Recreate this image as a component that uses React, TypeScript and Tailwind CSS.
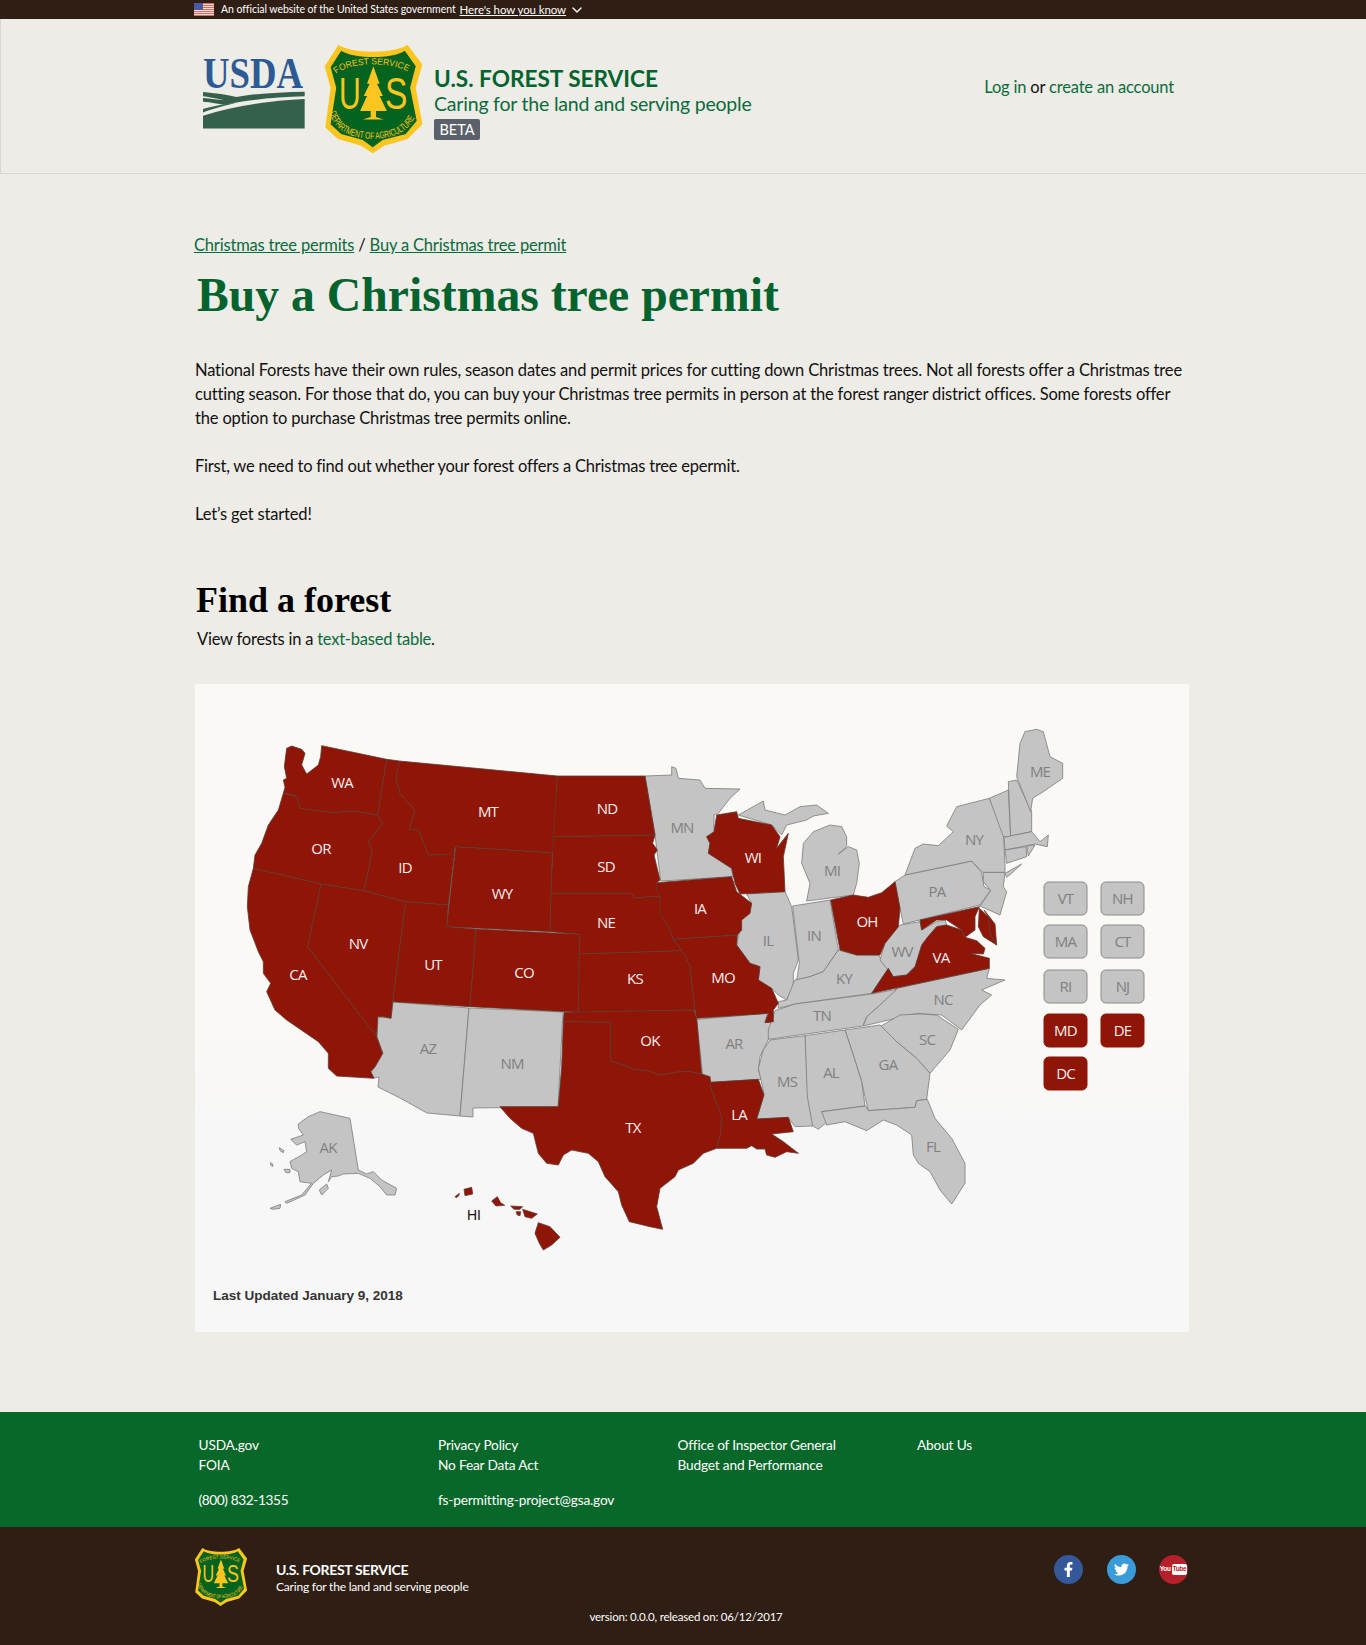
import { FaFacebookF, FaTwitter } from "react-icons/fa";
import { ChevronDown } from "lucide-react";

// -----------------------------------------------------------------------------
// MAP DATA
// -----------------------------------------------------------------------------
// Points are traced at 3x, each region against its own origin on the page.
const RED = "#8f1506";
const GREY = "#c4c4c4";
const PANEL_X = 195;
const PANEL_Y = 684;

const origins: Record<string, [number, number, number]> = {
  w: [220, 700, 1 / 3],
  e: [640, 700, 1 / 3],
  s: [490, 1000, 1 / 3],
  se: [700, 1000, 1 / 3],
  ak: [260, 1100, 1 / 3],
  p: [0, 0, 1],
};

const redShapes: [string, string][] = [
  ["w", "305,137 500,178 473,345 400,333 340,338 290,332 240,325 232,290 205,282 190,280 195,262 190,240 200,235 193,200 200,145 215,138 245,148 255,160 245,195 260,222 295,195 302,170"],
  ["w", "190,280 232,290 240,325 290,332 340,338 400,333 473,345 488,372 445,425 457,455 432,572 303,552 100,505 105,465 125,430 145,375 175,330"],
  ["w", "100,505 303,552 263,740 470,1010 488,1060 465,1100 452,1115 462,1135 350,1128 325,1105 325,1060 295,1025 200,960 165,930 140,875 152,850 130,820 130,785 115,755 90,690 82,620 85,560"],
  ["w", "303,552 432,572 557,605 518,905 513,955 490,950 473,950 470,1010 263,740"],
  ["w", "500,178 538,183 528,235 540,280 585,330 568,388 595,390 625,465 680,462 705,445 685,615 557,605 432,572 457,455 445,425 488,372 473,345"],
  ["w", "538,183 1012,228 1000,458 707,440 695,462 625,465 595,390 568,388 585,330 540,280 528,235"],
  ["w", "707,440 997,458 990,695 680,680"],
  ["w", "557,605 685,615 680,680 768,687 750,920 518,905"],
  ["w", "768,687 1080,703 1075,937 750,920"],
  ["w", "1012,228 1275,228 1305,405 1000,410"],
  ["w", "1000,410 1305,405 1298,430 1312,450 1302,465 1320,540 1310,548 1320,590 1285,590 1245,595 1235,580 993,580"],
  ["w", "993,580 1235,580 1245,595 1285,590 1320,590 1322,640 1345,680 1360,718 1395,765 1385,752 1078,762 1080,703 990,695"],
  ["w", "1078,762 1385,752 1395,765 1410,800 1425,930 1075,937"],
  ["e", "50,548 275,530 290,575 335,610 330,640 305,660 305,690 292,705 100,718 85,680 60,640 60,590 50,575"],
  ["e", "100,718 292,705 290,735 330,790 360,800 355,840 395,865 415,910 400,930 400,965 375,968 385,940 170,955 165,930 150,800 135,765"],
  ["e", "230,345 290,335 295,355 395,375 420,410 410,445 445,400 430,470 435,575 300,582 285,550 275,505 205,460 210,430 200,410 222,395"],
  ["e", "572,600 640,585 685,592 725,578 765,545 780,625 775,680 735,730 720,765 650,765 600,750"],
  ["e", "695,880 745,805 760,830 800,825 825,800 845,735 860,715 890,680 920,675 965,690 975,712 1010,722 1035,745 1030,762 990,760 1048,775 1048,805"],
  ["e", "840,660 1018,620 1005,650 1005,690 975,712 965,690 920,660 890,660 845,690"],
  ["e", "1018,625 1045,650 1050,700 1070,735 1030,710 1015,680"],
  ["e", "1032,630 1065,672 1070,735 1050,700 1045,650"],
  ["s", "222,37 612,30 620,55 635,222 600,215 570,215 510,225 470,212 430,208 400,195 362,183 362,67 220,65"],
  ["s", "220,65 362,67 362,183 400,195 430,208 470,212 510,225 570,215 600,215 635,222 660,230 665,270 695,350 692,400 680,445 640,460 610,490 565,510 555,530 510,565 500,620 518,688 480,680 418,665 395,615 385,575 345,530 325,485 295,460 245,450 220,465 205,495 170,490 145,460 130,400 95,385 60,355 30,320 205,320 215,200"],
  ["s", "660,247 805,238 822,285 800,357 895,352 910,395 845,402 880,425 925,460 890,455 855,472 830,465 825,447 800,447 785,437 770,445 680,445 692,400 695,350 665,270"],
  ["ak", "612,268 635,262 638,282 615,287"],
  ["ak", "585,290 598,280 596,288 588,293"],
  ["ak", "695,303 712,290 722,308 734,316 708,318"],
  ["ak", "752,318 788,320 780,328 762,328"],
  ["ak", "768,335 782,335 780,347 772,345"],
  ["ak", "788,328 832,342 815,355 795,350"],
  ["ak", "835,368 870,380 900,412 875,435 850,450 838,430 825,400"],
];

const greyShapes: [string, string][] = [
  ["p", "393,1002 469,1008 460,1116 427,1113 400,1098 378,1087 379,1077 374,1078 371,1072 375,1067 383,1053 377,1037 378,1017 391,1018"],
  ["p", "469,1008 563,1012 558,1107 473,1108 473,1117 460,1116"],
  ["s", "620,58 832,40 825,68 850,66 838,112 810,170 805,210 815,238 662,247 638,225"],
  ["e", "15,228 95,225 95,200 108,205 115,235 180,240 195,265 300,267 270,295 235,340 222,345 222,400 200,410 210,430 205,460 275,505 280,530 62,543 45,405"],
  ["e", "295,345 370,303 375,330 435,345 480,320 530,315 565,340 520,348 500,360 440,375 425,405 395,375"],
  ["e", "490,430 520,395 570,375 605,380 620,410 620,440 595,462 625,440 650,450 658,490 650,550 640,585 500,603 510,550 485,490"],
  ["e", "320,582 435,575 455,620 475,780 460,820 460,860 440,900 415,885 395,865 355,840 360,800 330,790 290,735 305,660 335,610"],
  ["e", "458,618 570,600 595,750 550,815 510,830 470,840 478,790"],
  ["e", "440,900 460,850 465,840 510,830 550,815 595,750 650,765 715,765 745,805 695,880 465,912 415,925 415,905"],
  ["e", "780,675 840,665 845,690 890,665 915,660 920,675 890,680 860,715 845,770 825,800 800,825 760,830 720,780 735,730 775,680"],
  ["e", "765,545 795,525 995,483 1025,517 1032,560 1052,570 1020,615 790,672 780,625"],
  ["e", "1030,517 1095,517 1090,560 1100,575 1080,645 1020,618 1052,572 1030,545"],
  ["e", "795,525 825,445 850,432 895,437 940,395 920,378 950,320 1048,295 1090,390 1095,495 1095,517 1028,517 995,483"],
  ["e", "1095,520 1145,492 1115,520 1100,532"],
  ["e", "1048,295 1105,270 1112,410 1090,410"],
  ["e", "1105,245 1130,240 1175,335 1175,395 1112,408"],
  ["e", "1130,230 1140,130 1155,95 1190,88 1210,95 1230,170 1268,190 1268,235 1210,275 1178,295 1172,335"],
  ["e", "1092,412 1175,395 1200,425 1225,405 1222,440 1185,432 1095,450"],
  ["e", "1095,450 1158,440 1160,470 1100,490"],
  ["e", "1160,438 1185,435 1165,468"],
  ["e", "770,865 1048,805 1040,835 1095,840 1025,870 1055,885 1020,915 965,990 905,945 830,940 725,965 670,978 680,950 720,915"],
  ["e", "385,1018 385,990 405,932 465,912 695,882 770,868 720,915 680,950 668,978"],
  ["se", "540,80 600,45 660,42 710,45 775,88 750,150 690,220 650,175 590,125"],
  ["se", "435,90 540,75 590,125 650,175 690,220 680,298 650,302 645,322 505,332 495,290 485,245 455,150"],
  ["se", "315,107 435,90 455,150 485,245 495,318 365,335 382,365 355,388 335,375 320,290"],
  ["se", "210,120 315,107 322,290 338,378 285,380 265,352 170,358 192,280 175,205 190,150"],
  ["se", "365,335 497,318 505,332 645,322 650,302 682,298 705,355 755,415 795,490 795,550 755,612 720,570 690,515 655,490 640,465 635,405 590,375 550,360 500,392 435,365 380,375"],
  ["ak", "115,72 145,50 180,35 270,55 295,210 320,222 340,215 365,240 410,265 405,285 380,285 360,260 330,235 295,220 250,222 235,228 215,230 205,245 215,210 190,225 160,250 135,285 80,310 75,305 125,285 155,250 120,245 115,215 95,205 90,185 125,165 140,155 135,125 110,135 92,118 130,105 115,85"],
  ["ak", "178,270 200,252 205,265 185,285"],
  ["ak", "30,325 62,313 60,325 38,328"],
  ["ak", "58,143 72,152 70,158 60,152"],
  ["ak", "32,188 38,192 38,200 32,195"],
  ["ak", "72,208 90,208 90,218 78,218"],
];

// label, page x, page y, on a red state
const labels: [string, number, number, boolean][] = [
  ["WA", 342, 783, true], ["MT", 488, 812, true], ["ND", 607, 809, true], ["ME", 1040, 772, false],
  ["MN", 682, 828, false], ["WI", 753, 858, true], ["MI", 832, 871, false], ["NY", 974, 840, false],
  ["OR", 321, 849, true], ["ID", 405, 868, true], ["SD", 606, 867, true], ["WY", 502, 894, true],
  ["IA", 700, 909, true], ["PA", 937, 892, false], ["OH", 867, 922, true], ["IN", 814, 936, false],
  ["IL", 768, 941, false], ["NE", 606, 923, true], ["NV", 358, 944, true], ["UT", 433, 965, true],
  ["VA", 941, 958, true], ["WV", 902, 952, false], ["CA", 298, 975, true], ["CO", 524, 973, true],
  ["KS", 635, 979, true], ["MO", 723, 978, true], ["KY", 844, 979, false], ["NC", 943, 1000, false],
  ["TN", 822, 1016, false], ["OK", 650, 1041, true], ["AR", 734, 1044, false], ["SC", 927, 1040, false],
  ["AZ", 428, 1049, false], ["NM", 512, 1064, false], ["GA", 888, 1065, false], ["AL", 831, 1073, false],
  ["MS", 787, 1082, false], ["LA", 739, 1115, true], ["TX", 633, 1128, true], ["FL", 933, 1147, false],
  ["AK", 328, 1148, false],
];

const keys: [string, number, number, boolean][] = [
  ["VT", 1044, 882, false], ["NH", 1101, 882, false],
  ["MA", 1044, 925, false], ["CT", 1101, 925, false],
  ["RI", 1044, 970, false], ["NJ", 1101, 970, false],
  ["MD", 1044, 1014, true], ["DE", 1101, 1014, true],
  ["DC", 1044, 1057, true],
];

function Shape({ o, points, fill, stroke }: { o: string; points: string; fill: string; stroke: string }) {
  const [ox, oy, s] = origins[o];
  return (
    <polygon
      points={points}
      fill={fill}
      stroke={stroke}
      strokeWidth={0.8}
      strokeLinejoin="round"
      vectorEffect="non-scaling-stroke"
      transform={`translate(${ox - PANEL_X} ${oy - PANEL_Y}) scale(${s})`}
    />
  );
}

function ForestMap() {
  return (
    <svg viewBox="0 0 994 648" className="block w-[994px] h-[648px]">
      {greyShapes.map(([o, p], i) => (
        <Shape key={i} o={o} points={p} fill={GREY} stroke="#7b7b7b" />
      ))}
      {redShapes.map(([o, p], i) => (
        <Shape key={i} o={o} points={p} fill={RED} stroke="#5e3a33" />
      ))}
      {labels.map(([t, x, y, red]) => (
        <text
          key={t}
          x={x - PANEL_X}
          y={y - PANEL_Y + 5}
          textAnchor="middle"
          fontFamily="'Open Sans', sans-serif"
          fontSize={15}
          letterSpacing={-0.8}
          fill={red ? "#f6eeee" : "#808080"}
        >
          {t}
        </text>
      ))}
      {keys.map(([t, x, y, red]) => (
        <g key={t}>
          <rect
            x={x - PANEL_X}
            y={y - PANEL_Y}
            width={43}
            height={33}
            rx={5}
            fill={red ? RED : GREY}
            stroke={red ? RED : "#8a8a8a"}
          />
          <text
            x={x - PANEL_X + 21.5}
            y={y - PANEL_Y + 22}
            textAnchor="middle"
            fontFamily="'Open Sans', sans-serif"
            fontSize={15}
            letterSpacing={-0.8}
            fill={red ? "#f6eeee" : "#808080"}
          >
            {t}
          </text>
        </g>
      ))}
      <text x={279} y={536} fontFamily="'Liberation Sans', sans-serif" fontSize={14} textAnchor="middle" fill="#111">
        HI
      </text>
      <text x={18} y={616} fontFamily="'Liberation Sans', sans-serif" fontWeight={700} fontSize={13.5} fill="#333">
        Last Updated January 9, 2018
      </text>
    </svg>
  );
}

// -----------------------------------------------------------------------------
// LOGOS
// -----------------------------------------------------------------------------
function UsdaLogo() {
  return (
    <svg viewBox="25 80 305 217" className="block w-[102px] h-[73px]">
      <text
        transform="translate(25 175) scale(0.82 1)"
        fontFamily="'Liberation Serif', serif"
        fontWeight={700}
        fontSize={134}
        fill="#2c5a94"
      >
        USDA
      </text>
      <path d="M25 258C120 228 230 212 329 208V296H25Z" fill="#34604c" />
      <path
        d="M25 187C60 190 100 195 125 202 180 192 260 187 329 186V200C240 202 150 212 90 225 70 222 50 218 25 216V205C50 207 70 210 90 212 60 205 40 202 25 200Z"
        fill="#34604c"
      />
      <path d="M25 238C60 228 100 222 130 218 90 228 60 236 25 248Z" fill="#34604c" />
    </svg>
  );
}

function ShieldLogo({ className }: { className: string }) {
  return (
    <svg viewBox="385 35 305 338" className={className}>
      <path
        d="M432 40C470 68 600 68 640 40L685 100 665 170 685 280 640 325 570 345 535 368 500 345 430 325 392 290 408 170 390 105Z"
        fill="#fcc520"
      />
      <path
        d="M440 58C480 84 595 84 632 58L665 105 648 170 668 270 635 310 565 328 535 350 505 328 440 310 408 280 425 170 408 108Z"
        fill="#03631f"
      />
      <path id="shield-top" d="M425 128C465 90 605 90 650 128" fill="none" />
      <path id="shield-bottom" d="M405 245C425 310 480 322 535 325 590 322 645 310 668 245" fill="none" />
      <text fontFamily="'Liberation Sans', sans-serif" fontSize={27} fill="#fcc520">
        <textPath href="#shield-top" textLength={225} lengthAdjust="spacingAndGlyphs">
          FOREST SERVICE
        </textPath>
      </text>
      <text fontFamily="'Liberation Sans', sans-serif" fontSize={29} fill="#fcc520">
        <textPath href="#shield-bottom" textLength={315} lengthAdjust="spacingAndGlyphs">
          DEPARTMENT OF AGRICULTURE
        </textPath>
      </text>
      <text
        transform="translate(433 235) scale(0.69 1)"
        fontFamily="'Liberation Sans', sans-serif"
        fontSize={132}
        fill="#fcc520"
      >
        U
      </text>
      <text
        transform="translate(572 235) scale(0.77 1)"
        fontFamily="'Liberation Sans', sans-serif"
        fontSize={132}
        fill="#fcc520"
      >
        S
      </text>
      <path
        d="M537 105L556 158 548 158 566 195 556 195 578 240H545V258L568 266H505L529 258V240H497L518 195 508 195 526 158 518 158Z"
        fill="#fcc520"
      />
    </svg>
  );
}

function Flag() {
  return (
    <svg viewBox="0 0 20 13" className="block w-5 h-[13px]">
      <rect width="20" height="13" fill="#f6dcd8" />
      {[0, 2, 4, 6, 8, 10, 12].map((y) => (
        <rect key={y} y={y} width="20" height="1" fill="#d9695c" />
      ))}
      <rect width="9" height="7" fill="#4a5aa0" />
    </svg>
  );
}

// -----------------------------------------------------------------------------
// PAGE
// -----------------------------------------------------------------------------
const footerColumns = [
  ["USDA.gov", "FOIA"],
  ["Privacy Policy", "No Fear Data Act"],
  ["Office of Inspector General", "Budget and Performance"],
  ["About Us"],
];

export default function App() {
  return (
    <div className="w-[1366px] h-[1645px] bg-[#eeece6] text-[#111] font-['Lato',sans-serif] overflow-hidden">
      {/* ---------------- GOV BANNER ---------------- */}
      <div className="h-[19px] bg-[#2f1e14] flex items-center pl-[194px] text-white">
        <Flag />
        <span className="ml-[7px] text-[10.5px] leading-none tracking-[-0.06px]">An official website of the United States government</span>
        <a className="ml-[4px] text-[11.5px] leading-none underline tracking-[-0.1px]">Here's how you know</a>
        <ChevronDown size={16} className="ml-[3px]" />
      </div>

      {/* ---------------- HEADER ---------------- */}
      <header className="h-[155px] border-l border-b border-[#d6d7d9] flex items-start pl-[202px] pr-[192px]">
        <div className="mt-[37px]">
          <UsdaLogo />
        </div>
        <div className="ml-[18px] mt-[24px]">
          <ShieldLogo className="block w-[101px] h-[112px]" />
        </div>
        <div className="ml-[10px] mt-[48px]">
          <div className="text-[22.6px] leading-6 font-bold text-[#03632f]">U.S. FOREST SERVICE</div>
          <div className="text-[19.5px] leading-6 tracking-[-0.2px] text-[#0a6b3d] mt-[1px]">Caring for the land and serving people</div>
          <div className="mt-[3px] w-[46px] h-[21px] rounded-[2px] bg-[#5b616b] text-white text-[14.5px] leading-[21px] text-center">
            BETA
          </div>
        </div>
        <div className="ml-auto mt-[56px] text-[16.5px] leading-6 tracking-[-0.18px]">
          <a className="text-[#0a6b3d]">Log in</a> or <a className="text-[#0a6b3d]">create an account</a>
        </div>
      </header>

      {/* ---------------- MAIN ---------------- */}
      <main className="pl-[195px] w-[1189px]">
        <div className="pt-[59px] -ml-px text-[16.5px] leading-6 tracking-[-0.18px]">
          <a className="text-[#0a6b3d] underline">Christmas tree permits</a> /{" "}
          <a className="text-[#0a6b3d] underline">Buy a Christmas tree permit</a>
        </div>
        <h1 className="mt-[12px] ml-[2px] text-[47.7px] leading-[52px] font-bold text-[#03632f] font-['Liberation_Serif',serif]">
          Buy a Christmas tree permit
        </h1>
        <div className="mt-[37px] text-[16.5px] leading-6 tracking-[-0.17px] whitespace-nowrap">
          <p>National Forests have their own rules, season dates and permit prices for cutting down Christmas trees. Not all forests offer a Christmas tree</p>
          <p>cutting season. For those that do, you can buy your Christmas tree permits in person at the forest ranger district offices. Some forests offer</p>
          <p>the option to purchase Christmas tree permits online.</p>
          <p className="mt-6 tracking-[-0.22px]">First, we need to find out whether your forest offers a Christmas tree epermit.</p>
          <p className="mt-6">Let’s get started!</p>
        </div>
        <h2 className="mt-[54px] ml-px text-[36px] leading-10 font-bold text-black font-['Liberation_Serif',serif]">
          Find a forest
        </h2>
        <p className="mt-[7px] ml-[2px] text-[16.5px] leading-6 tracking-[-0.22px]">
          View forests in a <a className="text-[#0a6b3d]">text-based table</a>.
        </p>
        <div className="mt-[33px] w-[994px] h-[648px] bg-linear-to-b from-[#fbf9f5] from-50% to-[#f7f7f7] to-70%">
          <ForestMap />
        </div>
      </main>

      {/* ---------------- FOOTER LINKS ---------------- */}
      <div className="mt-[80px] h-[115px] bg-[#086829] text-white text-[13.7px] leading-5 tracking-[-0.18px] pl-[198.5px] pt-[23px]">
        <div className="grid grid-cols-[239.5px_239.5px_239.5px_239.5px] w-[958px]">
          {footerColumns.map((links) => (
            <div key={links[0]}>
              {links.map((l) => (
                <div key={l}>{l}</div>
              ))}
            </div>
          ))}
        </div>
        <div className="mt-[15px] grid grid-cols-[239.5px_239.5px]">
          <div className="tracking-[-0.4px]">(800) 832-1355</div>
          <div>fs-permitting-project@gsa.gov</div>
        </div>
      </div>

      {/* ---------------- FOOTER BRAND ---------------- */}
      <footer className="h-[118px] bg-[#2f1e14] text-white">
        <div className="flex items-start pl-[194px] pr-[178px] pt-[20px]">
          <ShieldLogo className="block w-[54px] h-[60px]" />
          <div className="ml-[28px] mt-[13px]">
            <div className="text-[14px] leading-5 font-bold tracking-[-0.35px]">U.S. FOREST SERVICE</div>
            <div className="text-[12px] leading-[14px] tracking-[-0.2px]">Caring for the land and serving people</div>
          </div>
          <div className="ml-auto mt-[8px] flex gap-[23.5px]">
            <div className="w-[29px] h-[29px] rounded-full bg-[#35589b] flex items-center justify-center text-[15px]">
              <FaFacebookF />
            </div>
            <div className="w-[29px] h-[29px] rounded-full bg-[#3a9bd9] flex items-center justify-center text-[15px]">
              <FaTwitter />
            </div>
            <div className="w-[29px] h-[29px] rounded-full overflow-hidden bg-[#b5202a] flex items-center justify-center text-[6.5px] font-bold leading-none tracking-tighter font-['Liberation_Sans',sans-serif]">
              You
              <span className="ml-px px-px py-[2px] rounded-[2px] bg-white text-[#b5202a]">Tube</span>
            </div>
          </div>
        </div>
        <div className="w-[1372px] text-center text-[11.5px] leading-5 tracking-[-0.2px]">
          version: 0.0.0, released on: 06/12/2017
        </div>
      </footer>
    </div>
  );
}
